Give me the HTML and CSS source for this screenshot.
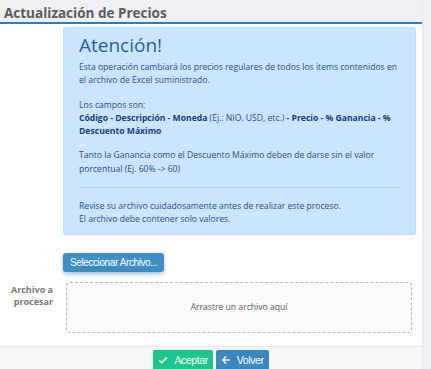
FILE: index.html
```html
<!DOCTYPE html>
<html lang="es">
<head>
    <meta charset="UTF-8">
    <meta name="viewport" content="width=device-width, initial-scale=1.0">
    <title>Actualización de Precios</title>
    <link rel="stylesheet" href="styles.css">
</head>
<body>
    <div class="panel">
        <h2 class="panel-title">Actualización de Precios</h2>

        <div class="panel-body">
            <div class="alert">
                <h3 class="alert-heading">Atención!</h3>
                <p>Esta operación cambiará los precios regulares de todos los items contenidos en el archivo de Excel suministrado.</p>
                <p>Los campos son:<br>
                    <b>Código - Descripción - Moneda</b> (Ej.: NIO, USD, etc.) <b>- Precio - % Ganancia - % Descuento Máximo</b></p>
                <p>Tanto la Ganancia como el Descuento Máximo deben de darse sin el valor porcentual (Ej. 60% -&gt; 60)</p>
                <hr>
                <p class="last">Revise su archivo cuidadosamente antes de realizar este proceso.<br>
                    El archivo debe contener solo valores.</p>
            </div>

            <div class="form-row">
                <div class="form-label"></div>
                <div><button class="btn btn-file">Seleccionar Archivo...</button></div>
            </div>

            <div class="form-row">
                <label class="form-label">Archivo a procesar</label>
                <div class="dropzone">Arrastre un archivo aquí</div>
            </div>
        </div>

        <div class="panel-footer">
            <button class="btn btn-ok">
                <svg viewBox="0 0 16 16" width="10" height="10"><path d="M2 8.5l4 4 8-8.5" fill="none" stroke="#fff" stroke-width="2.6"/></svg>
                Aceptar
            </button>
            <button class="btn btn-back">
                <svg viewBox="0 0 16 16" width="10" height="10"><path d="M14 8H3M8 2.5L2.5 8 8 13.5" fill="none" stroke="#fff" stroke-width="2.4"/></svg>
                Volver
            </button>
        </div>
    </div>
</body>
</html>
```

FILE: styles.css
```css
body {
    margin: 0;
    background-color: #eef0f3;
    font-family: 'Open Sans', 'Noto Sans', sans-serif;
    color: #333;
}

.panel {
    margin-right: 8px;
    border-right: 1px solid #e4e6ea;
    min-height: 369px;
    display: flex;
    flex-direction: column;
}

.panel-title {
    margin: 0;
    padding: 5px 4px 1px;
    height: 16px;
    font-size: 13.5px;
    line-height: 16px;
    font-weight: 700;
    color: #5b5b5b;
    border-bottom: 2px solid #2e7db5;
}

.panel-body {
    background-color: #fff;
    padding: 3px 0 13px;
}

.alert {
    margin: 0 6px 0 63px;
    padding: 6px 15px 7px 15px;
    background-color: #cce5ff;
    border: 1px solid #bcdcfd;
    border-radius: 3px;
    color: #1b4f8c;
    font-size: 8.6px;
    line-height: 13.3px;
}

.alert-heading {
    margin: 0 0 5px;
    font-size: 19px;
    line-height: 22px;
    font-weight: 400;
    color: #1f5f9f;
}

.alert p {
    margin: 0 0 11px;
}

.alert p.last {
    margin-bottom: 0;
}

.alert b {
    font-weight: 700;
    color: #0f4282;
}

.alert hr {
    margin: 10px 0 12px;
    border: 0;
    border-top: 1px solid #a8cff5;
}

.form-row {
    display: grid;
    grid-template-columns: 63px 1fr;
    align-items: start;
    margin-top: 14px;
}

.form-row + .form-row {
    margin-top: 10px;
}

.form-label {
    padding: 2px 10px 0 0;
    text-align: right;
    font-size: 9px;
    line-height: 12px;
    font-weight: 700;
    color: #777;
}

.btn {
    border: none;
    color: #fff;
    font-family: 'Liberation Sans', sans-serif;
    letter-spacing: -0.4px;
    cursor: pointer;
}

.btn-file {
    height: 19px;
    padding: 0 7px;
    background-color: #3d8fc3;
    border-radius: 3px;
    font-size: 10px;
    box-shadow: 0 2px 4px rgba(0, 60, 120, 0.35);
}

.dropzone {
    margin: 0 10px 0 3px;
    height: 49px;
    display: flex;
    align-items: center;
    justify-content: center;
    border: 1px dashed #b5b5b5;
    border-radius: 4px;
    background-color: #fafbfc;
    font-size: 8.6px;
    color: #555;
}

.panel-footer {
    flex: 1;
    border-top: 1px solid #e6e8eb;
    background-color: #f7f8f9;
    padding-top: 3px;
    display: flex;
    justify-content: center;
    align-items: flex-start;
    gap: 3px;
}

.btn-ok,
.btn-back {
    height: 20px;
    padding: 0 5px;
    font-size: 10.5px;
    display: flex;
    align-items: center;
    gap: 6px;
    border-radius: 2px 2px 0 0;
}

.btn-ok {
    background-color: #1dc48e;
}

.btn-back {
    background-color: #3b86be;
}
```
